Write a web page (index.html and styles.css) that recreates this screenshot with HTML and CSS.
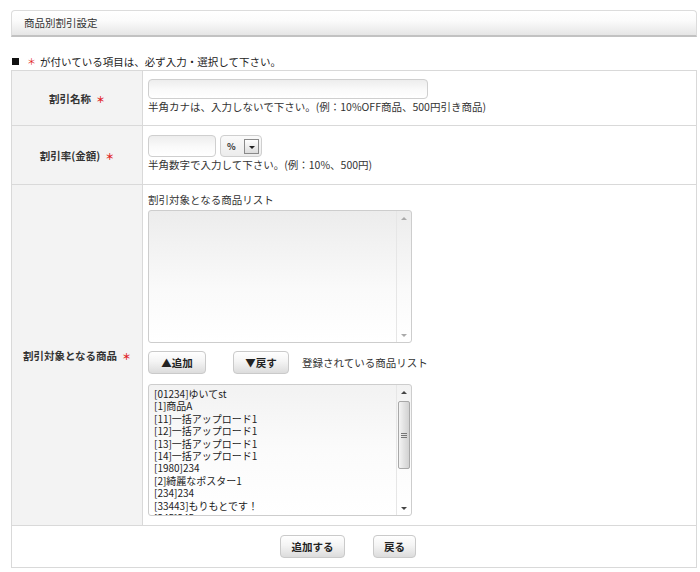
FILE: index.html
```html
<!DOCTYPE html>
<html lang="ja">
<head>
<meta charset="utf-8">
<title>商品別割引設定</title>
<link rel="stylesheet" href="styles.css">
</head>
<body>
<div class="page">
  <div class="titlebar">商品別割引設定</div>
  <p class="notice"><span class="sq"></span><span class="req">＊</span>が付いている項目は、必ず入力・選択して下さい。</p>
  <table class="form">
    <tr class="row1">
      <th>割引名称<span class="req">＊</span></th>
      <td>
        <div class="input name-input"></div>
        <div class="hint">半角カナは、入力しないで下さい。(例：10%OFF商品、500円引き商品)</div>
      </td>
    </tr>
    <tr class="row2">
      <th>割引率(金額)<span class="req">＊</span></th>
      <td>
        <div class="rate">
          <div class="input rate-input"></div>
          <div class="select"><span class="sel-val">%</span><span class="sel-btn"><span class="tri-down"></span></span></div>
        </div>
        <div class="hint">半角数字で入力して下さい。(例：10%、500円)</div>
      </td>
    </tr>
    <tr class="row3">
      <th>割引対象となる商品<span class="req">＊</span></th>
      <td>
        <div class="caption">割引対象となる商品リスト</div>
        <div class="listbox list-top">
          <div class="list-items"></div>
          <div class="sbar">
            <span class="arr up dim"></span>
            <span class="track"></span>
            <span class="arr down dim"></span>
          </div>
        </div>
        <div class="move-row">
          <button class="btn btn-add">▲追加</button>
          <button class="btn btn-back">▼戻す</button>
          <span class="move-label">登録されている商品リスト</span>
        </div>
        <div class="listbox list-bottom">
          <div class="list-items">
            <div class="item">[01234]ゆいてst</div>
            <div class="item">[1]商品A</div>
            <div class="item">[11]一括アップロード1</div>
            <div class="item">[12]一括アップロード1</div>
            <div class="item">[13]一括アップロード1</div>
            <div class="item">[14]一括アップロード1</div>
            <div class="item">[1980]234</div>
            <div class="item">[2]綺麗なポスター1</div>
            <div class="item">[234]234</div>
            <div class="item">[33443]もりもとです！</div>
            <div class="item">[345]345</div>
          </div>
          <div class="sbar">
            <span class="arr up"></span>
            <span class="track"><span class="thumb"><span class="grip"></span></span></span>
            <span class="arr down"></span>
          </div>
        </div>
      </td>
    </tr>
    <tr class="foot">
      <td colspan="2">
        <div class="foot-btns">
          <button class="btn btn-submit">追加する</button>
          <button class="btn btn-return">戻る</button>
        </div>
      </td>
    </tr>
  </table>
</div>
</body>
</html>
```

FILE: styles.css
```css
html, body {
  margin: 0;
  padding: 0;
  background: #fff;
}
body {
  font-family: "Noto Sans CJK JP", "Liberation Sans", sans-serif;
  font-size: 10.5px;
  color: #333;
}
.page {
  padding: 10px 3px 0 11px;
}
.titlebar {
  box-sizing: border-box;
  height: 27px;
  border: 1px solid #dcdcdc;
  border-bottom: 2px solid #c2c2c2;
  border-radius: 4px 4px 0 0;
  background: linear-gradient(#ffffff, #fbfbfb 40%, #e6e6e6);
  padding-left: 12px;
  line-height: 24px;
  font-size: 10.5px;
  color: #333;
}
.notice {
  margin: 16px 0 0 1px;
  height: 17px;
  line-height: 14px;
  display: flex;
  align-items: center;
  color: #222;
}
.sq {
  display: inline-block;
  width: 7px;
  height: 7px;
  background: #111;
  margin-right: 8px;
}
.req {
  color: #e02020;
  font-size: 9px;
  margin-left: 0;
  margin-right: 4px;
}
th .req {
  margin-left: 5px;
  margin-right: 0;
}
.form {
  border-collapse: collapse;
  width: 686px;
  border: 1px solid #d6d6d6;
}
.form th, .form td {
  border: 1px solid #d9d9d9;
  padding: 0;
}
.form th {
  width: 131px;
  box-sizing: border-box;
  background: #f3f3f3;
  font-weight: bold;
  text-align: center;
  vertical-align: middle;
  color: #333;
}
.form td {
  vertical-align: top;
  text-align: left;
}
.row1 td { padding: 8px 5px 11px; }
.row2 td { padding: 9px 5px 12px; }
.row3 td { padding: 8px 5px 9px; }
.input {
  box-sizing: border-box;
  border: 1px solid #cfcfcf;
  border-radius: 4px;
  background: linear-gradient(#ededed, #fafafa 55%, #ffffff);
}
.name-input {
  width: 280px;
  height: 20px;
}
.hint {
  margin-top: 1px;
  line-height: 14px;
  height: 14px;
}
.rate {
  display: flex;
  gap: 4px;
  height: 22px;
}
.rate-input {
  width: 68px;
  height: 22px;
}
.select {
  box-sizing: border-box;
  width: 42px;
  height: 22px;
  border: 1px solid #cfcfcf;
  border-radius: 4px;
  background: linear-gradient(#fafafa, #ececec);
  display: flex;
  align-items: center;
  padding-left: 6px;
}
.sel-val {
  width: 17px;
  font-size: 9px;
  font-weight: bold;
  color: #333;
}
.sel-btn {
  box-sizing: border-box;
  width: 15px;
  height: 15px;
  border: 1px solid #8a8a8a;
  background: linear-gradient(#ffffff, #dcdcdc);
  display: flex;
  align-items: center;
  justify-content: center;
}
.tri-down {
  width: 0;
  height: 0;
  border-left: 3px solid transparent;
  border-right: 3px solid transparent;
  border-top: 3px solid #222;
  margin-top: 2px;
}
.caption {
  line-height: 14px;
  height: 14px;
}
.listbox {
  box-sizing: border-box;
  width: 264px;
  border: 1px solid #cdcdcd;
  border-radius: 3px;
  display: flex;
  overflow: hidden;
}
.list-top {
  margin-top: 3px;
  height: 133px;
  background: linear-gradient(#ececec, #fafafa 60%, #ffffff);
}
.list-bottom {
  margin-top: 10px;
  height: 132px;
  background: linear-gradient(#f2f2f2, #fbfbfb 50%, #ffffff);
}
.list-items {
  flex: 1;
  overflow: hidden;
  padding: 3px 0 0 5px;
  font-size: 10px;
  line-height: 12.4px;
  color: #222;
}
.item {
  line-height: 12.4px;
  white-space: nowrap;
}
.sbar {
  width: 14px;
  border-left: 1px solid #e6e6e6;
  display: flex;
  flex-direction: column;
  align-items: center;
}
.arr {
  height: 14px;
  width: 14px;
  display: flex;
  align-items: center;
  justify-content: center;
}
.arr::before {
  content: "";
  width: 0;
  height: 0;
  border-left: 3px solid transparent;
  border-right: 3px solid transparent;
}
.arr.up::before { border-bottom: 3px solid #444; }
.arr.down::before { border-top: 3px solid #444; }
.arr.dim.up::before { border-bottom-color: #aaa; }
.arr.dim.down::before { border-top-color: #aaa; }
.track {
  flex: 1;
  width: 100%;
  display: flex;
  justify-content: center;
}
.thumb {
  box-sizing: border-box;
  margin-top: 2px;
  width: 12px;
  height: 68px;
  border: 1px solid #a8a8a8;
  border-radius: 2px;
  background: linear-gradient(90deg, #f4f4f4, #e2e2e2 50%, #d2d2d2);
  display: flex;
  align-items: center;
  justify-content: center;
}
.grip {
  width: 6px;
  height: 5px;
  border-top: 1px solid #777;
  border-bottom: 1px solid #777;
  box-sizing: border-box;
  background: linear-gradient(#777, #777) center / 6px 1px no-repeat;
}
.move-row {
  margin-top: 8px;
  display: flex;
  align-items: center;
  height: 23px;
}
.btn {
  box-sizing: border-box;
  height: 23px;
  border: 1px solid #cacaca;
  border-radius: 4px;
  background: linear-gradient(#ffffff, #f4f4f4 45%, #dcdcdc);
  font-family: "Noto Sans CJK JP", "Liberation Sans", sans-serif;
  font-size: 10.5px;
  font-weight: bold;
  color: #222;
  padding: 0;
  line-height: 21px;
  text-align: center;
}
.btn-add { width: 58px; }
.btn-back { width: 56px; margin-left: 27px; }
.move-label { margin-left: 13px; }
.foot td {
  padding: 9px 12px 9px 0;
}
.foot-btns {
  display: flex;
  justify-content: center;
  gap: 28px;
}
.btn-submit { width: 65px; }
.btn-return { width: 43px; }
```
